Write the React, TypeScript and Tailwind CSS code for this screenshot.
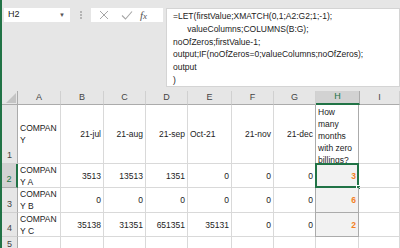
import React from "react";

const cols = ["A", "B", "C", "D", "E", "F", "G", "H", "I"];

type Cell = { v?: React.ReactNode; align?: "l" | "r" };

const rows: { n: number; h: string; cells: Cell[] }[] = [
  {
    n: 1,
    h: "h-[59px]",
    cells: [
      { v: <>COMPAN<br />Y</>, align: "l" },
      { v: "21-jul" },
      { v: "21-aug" },
      { v: "21-sep" },
      { v: "Oct-21", align: "l" },
      { v: "21-nov" },
      { v: "21-dec" },
      { v: <>How<br />many<br />months<br />with zero<br />billings?</>, align: "l" },
      {},
    ],
  },
  {
    n: 2,
    h: "h-[24px]",
    cells: [
      { v: <>COMPAN<br />Y A</>, align: "l" },
      { v: "3513" },
      { v: "13513" },
      { v: "1351" },
      { v: "0" },
      { v: "0" },
      { v: "0" },
      { v: "3" },
      {},
    ],
  },
  {
    n: 3,
    h: "h-[25px]",
    cells: [
      { v: <>COMPAN<br />Y B</>, align: "l" },
      { v: "0" },
      { v: "0" },
      { v: "0" },
      { v: "0" },
      { v: "0" },
      { v: "0" },
      { v: "6" },
      {},
    ],
  },
  {
    n: 4,
    h: "h-[24px]",
    cells: [
      { v: <>COMPAN<br />Y C</>, align: "l" },
      { v: "35138" },
      { v: "31351" },
      { v: "651351" },
      { v: "35131" },
      { v: "0" },
      { v: "0" },
      { v: "2" },
      {},
    ],
  },
  { n: 5, h: "h-[12px]", cells: Array.from({ length: 9 }, () => ({})) },
];

const formula = [
  "=LET(firstValue;XMATCH(0,1;A2:G2;1;-1);",
  "\u00a0\u00a0\u00a0\u00a0\u00a0\u00a0valueColumns;COLUMNS(B:G);",
  "noOfZeros;firstValue-1;",
  "output;IF(noOfZeros=0;valueColumns;noOfZeros);",
  "output",
  ")",
];

const widths = ["w-[43px]", "w-[43px]", "w-[42px]", "w-[42px]", "w-[44px]", "w-[42px]", "w-[42px]", "w-[44px]", "flex-1"];

function FormulaBar() {
  return (
    <div className="flex h-[91px] items-start pt-[8px] pl-[2px]">
      <div className="flex h-[14px] w-[66px] items-center justify-between bg-white pl-[4px] pr-[5px] text-[9px] text-[#222]">
        <span>H2</span>
        <span className="text-[6px] text-[#555]">▼</span>
      </div>
      <div className="flex w-[21px] flex-col items-center gap-[1px] pt-[3px]">
        <span className="h-[2px] w-[2px] bg-[#b4b4b4]" />
        <span className="h-[2px] w-[2px] bg-[#b4b4b4]" />
        <span className="h-[2px] w-[2px] bg-[#b4b4b4]" />
      </div>
      <div className="flex h-[14px] w-[72px] items-center bg-white">
        <svg width="24" height="14" viewBox="0 0 24 14" className="ml-[1px]">
          <path d="M8 3 L16 11 M16 3 L8 11" stroke="#a6a6a6" strokeWidth="1" fill="none" />
        </svg>
        <svg width="22" height="14" viewBox="0 0 22 14">
          <path d="M6 7.5 L9.5 11 L16 3.5" stroke="#a6a6a6" strokeWidth="1.1" fill="none" />
        </svg>
        <span className="ml-[2px] font-['Liberation_Serif',serif] text-[11px] italic text-[#555]">
          f<span className="text-[9px]">x</span>
        </span>
      </div>
      <div className="ml-[3px] h-[79px] flex-1 border border-[#d4d4d4] bg-white pl-[6px] pt-[1px] text-[8.5px] leading-[12.8px] text-[#222]">
        {formula.map((l, i) => (
          <div key={i} className="whitespace-pre">
            {l}
          </div>
        ))}
      </div>
    </div>
  );
}

function ColHeaders() {
  return (
    <div className="flex h-[14px] bg-[#e6e6e6] text-[9px] text-[#444]">
      <div className="flex w-[16px] items-end justify-end border-r border-b border-[#ababab] pr-[1px] pb-[1px]">
        <svg width="10" height="10" viewBox="0 0 10 10">
          <path d="M10 0 L10 10 L0 10 Z" fill="#c4c4c4" />
        </svg>
      </div>
      {cols.map((c, i) => {
        const sel = c === "H";
        return (
          <div
            key={c}
            className={`${widths[i]} flex items-center justify-center border-r ${
              sel
                ? "border-b-2 border-r-[#ababab] border-b-[#217346] bg-[#d2d2d2] text-[#217346]"
                : "border-b border-r-[#d0d0d0] border-b-[#ababab]"
            }`}
          >
            {c}
          </div>
        );
      })}
    </div>
  );
}

function Row({ r }: { r: (typeof rows)[number] }) {
  const selRow = r.n === 2;
  const last = r.n === 5;
  return (
    <div className={`flex ${r.h}`}>
      <div
        className={`flex w-[16px] justify-center border-r text-[9px] ${
          last ? "items-start pt-[1px]" : "items-end border-b pb-[1px]"
        } ${
          selRow
            ? "border-b-[#ababab] border-r-2 border-r-[#217346] bg-[#d2d2d2] text-[#217346]"
            : "border-b-[#d0d0d0] border-r-[#ababab] bg-[#e6e6e6] text-[#444]"
        }`}
      >
        {r.n}
      </div>
      {r.cells.map((c, i) => {
        const isH = i === 7;
        const hData = isH && r.n >= 2 && r.n <= 4;
        const active = isH && r.n === 2;
        let cls = "border-b border-r border-[#d9d9d9]";
        if (isH && r.n === 1) cls = "border-b border-r border-b-[#d9d9d9] border-r-[#ababab]";
        if (hData) cls = "border-b border-r border-[#ababab] bg-[#f2f2f2]";
        if (last) cls = "border-r border-[#d9d9d9]";
        const left = c.align === "l";
        return (
          <div
            key={i}
            className={`relative flex ${widths[i]} items-center ${left ? "justify-start pl-[2px]" : "justify-end pr-[2px]"} ${cls} ${
              isH ? "-ml-px" : ""
            } ${isH && r.n <= 4 ? "border-l border-l-[#ababab]" : ""}`}
          >
            {c.v !== undefined && (
              <div
                className={`text-[8.5px] leading-[12px] ${
                  hData ? "font-bold text-[#f4801f]" : "text-[#222]"
                } ${isH && r.n === 1 ? "self-start pt-[1px]" : ""}`}
              >
                {c.v}
              </div>
            )}
            {active && (
              <>
                <div className="pointer-events-none absolute -top-px -right-px -bottom-px -left-px border-2 border-[#217346]" />
                <div className="absolute -right-[3px] -bottom-[3px] h-[5px] w-[5px] border border-white bg-[#217346]" />
              </>
            )}
          </div>
        );
      })}
    </div>
  );
}

export default function App() {
  return (
    <div className="h-[248px] w-[400px] overflow-hidden border-l-2 border-[#217346] bg-[#e6e6e6] font-['Liberation_Sans',sans-serif]">
      <FormulaBar />
      <ColHeaders />
      <div className="bg-white">
        {rows.map((r) => (
          <Row key={r.n} r={r} />
        ))}
      </div>
    </div>
  );
}
